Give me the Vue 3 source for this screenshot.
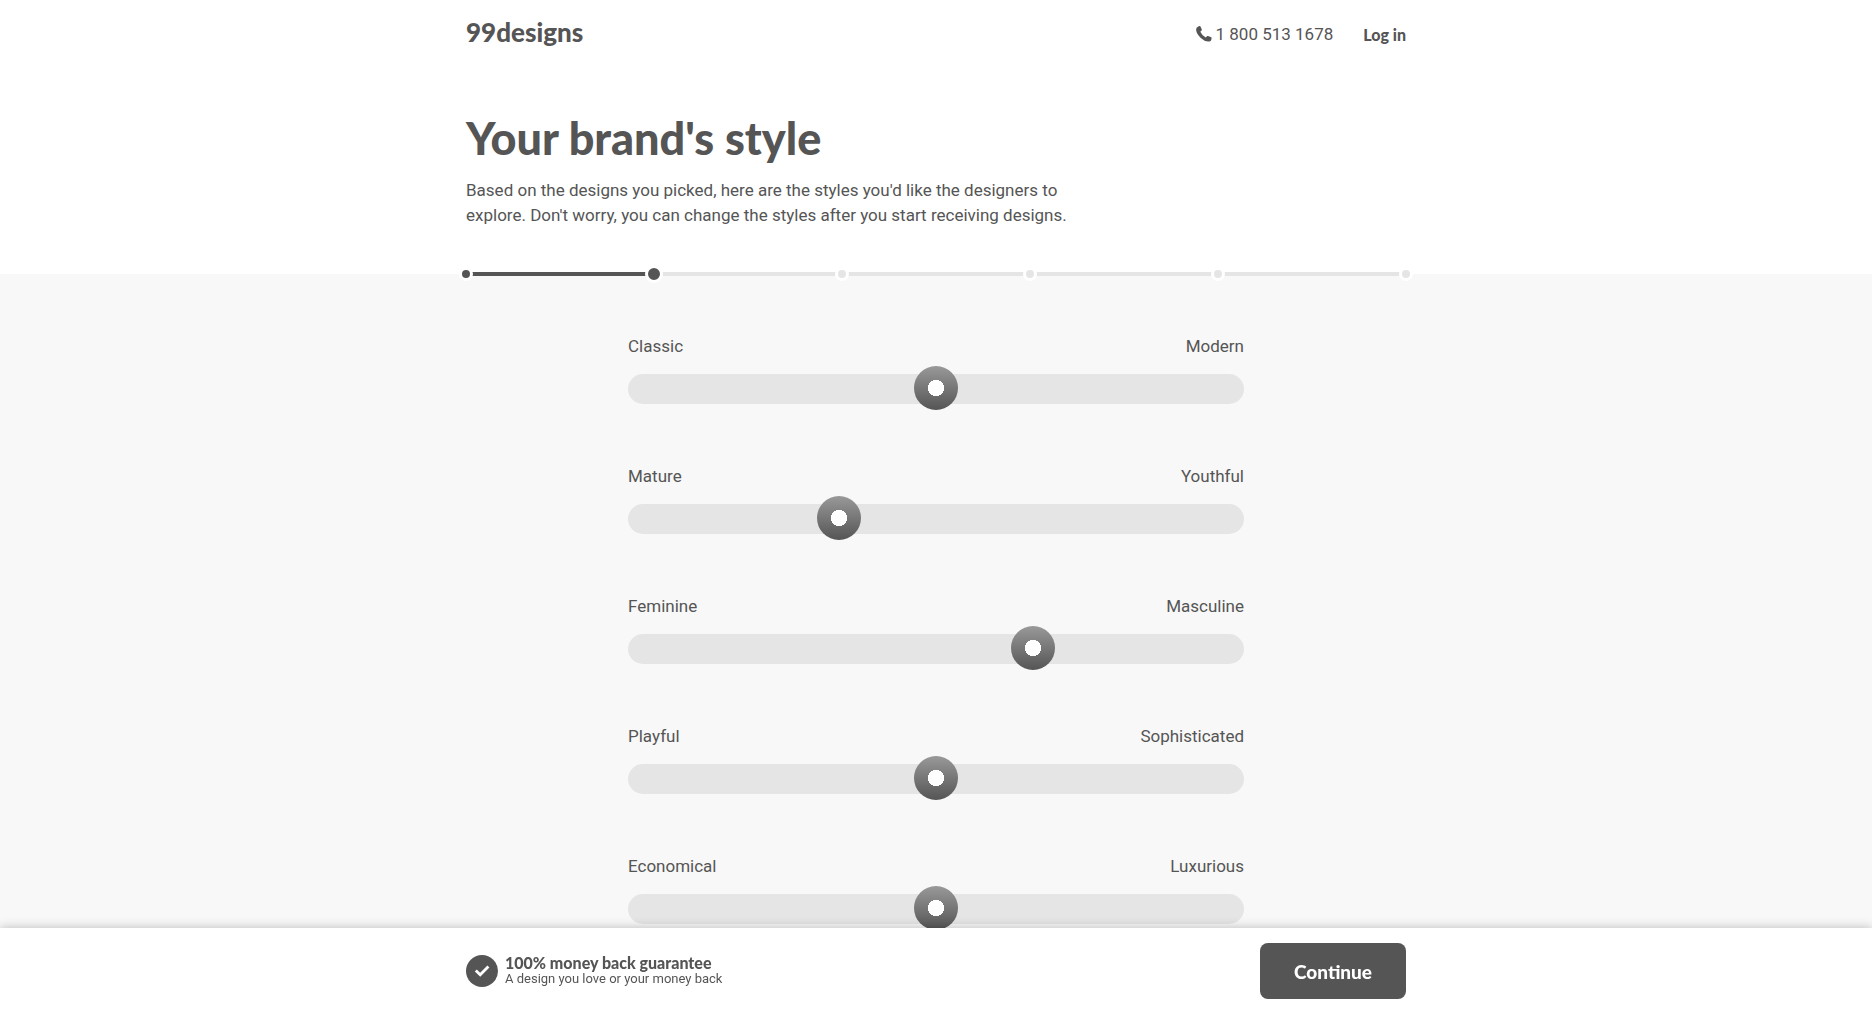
<template>
  <div class="page">
    <header class="top">
      <div class="container">
        <nav class="navbar">
          <a href="#" class="logo">99designs</a>
          <div class="nav-links">
            <a href="tel:18005131678" class="phone">
              <svg class="phone-icon" viewBox="0 0 16 16" aria-hidden="true">
                <path d="M2.2.5 3.600.1q.6-.1.9.5l1.300 2.900q.2.5-.2.9L4.300 5.700q1.800 3.900 5.500 5.700l1.400-1.300q.4-.3.900-.1l3.100 1.300q.6.3.4.9l-.4 1.900q-.2.900-1.100 1.200-4.700 1.100-9.300-3.300T.1 3.600Q.1 1.400 2.200.5z" />
              </svg>
              <span>1 800 513 1678</span>
            </a>
            <a href="#" class="login">Log in</a>
          </div>
        </nav>
        <h1 class="title">Your brand's style</h1>
        <p class="intro">
          Based on the designs you picked, here are the styles you'd like the designers to
          explore. Don't worry, you can change the styles after you start receiving designs.
        </p>
        <ol class="progress" aria-label="Progress">
          <li class="progress-fill" :style="{ width: progressWidth }" aria-hidden="true"></li>
          <li
            v-for="step in stepCount"
            :key="step"
            class="step"
            :class="{ done: step < currentStep, current: step === currentStep }"
          >
            <span class="dot"></span>
          </li>
        </ol>
      </div>
    </header>

    <main class="styles">
      <div v-for="item in sliders" :key="item.id" class="slider-row">
        <div class="slider-labels">
          <label :for="item.id">{{ item.left }}</label>
          <label :for="item.id">{{ item.right }}</label>
        </div>
        <input
          :id="item.id"
          v-model.number="item.value"
          class="slider"
          type="range"
          min="0"
          max="100"
        />
      </div>
    </main>

    <footer class="bottom-bar">
      <div class="container bottom-inner">
        <div class="guarantee">
          <svg class="guarantee-icon" viewBox="0 0 32 32" aria-hidden="true">
            <circle cx="16" cy="16" r="16" fill="#555" />
            <path d="M9.800 15.600l4.400 4.200 8.200-8.300" fill="none" stroke="#fff" stroke-width="2.800" />
          </svg>
          <div>
            <div class="guarantee-title">100% money back guarantee</div>
            <div class="guarantee-text">A design you love or your money back</div>
          </div>
        </div>
        <button type="button" class="continue-btn">Continue</button>
      </div>
    </footer>
  </div>
</template>

<script setup>
import { computed, ref } from 'vue'

const stepCount = 6
const currentStep = ref(2)

const progressWidth = computed(() => `${((currentStep.value - 1) / (stepCount - 1)) * 100}%`)

const sliders = ref([
  { id: 'classic-modern', left: 'Classic', right: 'Modern', value: 50 },
  { id: 'mature-youthful', left: 'Mature', right: 'Youthful', value: 33 },
  { id: 'feminine-masculine', left: 'Feminine', right: 'Masculine', value: 67 },
  { id: 'playful-sophisticated', left: 'Playful', right: 'Sophisticated', value: 50 },
  { id: 'economical-luxurious', left: 'Economical', right: 'Luxurious', value: 50 }
])
</script>

<style>
body {
  margin: 0;
  background: #f8f8f8;
}
</style>

<style scoped>
.page {
  font-family: Roboto, "Liberation Sans", sans-serif;
  font-size: 17px;
  line-height: 25px;
  color: #555;
}

.container {
  max-width: 940px;
  margin: 0 auto;
}

.top {
  display: flow-root;
  background: #fff;
}

.navbar {
  display: flex;
  align-items: center;
  justify-content: space-between;
  height: 68px;
}

.logo {
  padding-bottom: 4px;
  font-family: Lato, sans-serif;
  font-size: 26px;
  font-weight: 900;
  color: #555;
  text-decoration: none;
}

.nav-links {
  display: flex;
  align-items: center;
  gap: 30px;
}

.phone {
  display: flex;
  align-items: center;
  gap: 4px;
  color: #555;
  text-decoration: none;
}

.phone-icon {
  width: 16px;
  height: 16px;
  fill: #555;
}

.login {
  font-family: Lato, sans-serif;
  font-weight: 900;
  font-size: 16px;
  color: #555;
  text-decoration: none;
}

.title {
  margin: 0;
  padding-top: 40px;
  font-family: Lato, sans-serif;
  font-size: 45px;
  font-weight: 900;
  line-height: 60px;
}

.intro {
  max-width: 620px;
  margin: 0;
  padding: 10px 0 44px;
}

/* centred on the lower edge of the white header */
.progress {
  display: flex;
  align-items: center;
  justify-content: space-between;
  position: relative;
  height: 4px;
  margin: 0 0 -2px;
  padding: 0;
  list-style: none;
  background: #e5e5e5;
}

.progress-fill {
  position: absolute;
  left: 0;
  height: 4px;
  background: #555;
}

.step {
  position: relative;
  display: flex;
  justify-content: center;
  width: 0;
}

.dot {
  flex-shrink: 0;
  width: 8px;
  height: 8px;
  border: 3px solid #fff;
  border-radius: 50%;
  background: #e5e5e5;
}

.step.done .dot {
  background: #555;
}

.step.current .dot {
  width: 12px;
  height: 12px;
  background: #555;
}

.styles {
  display: flex;
  flex-direction: column;
  gap: 60px;
  max-width: 616px;
  margin: 0 auto;
  padding: 60px 0 86px;
}

.slider-row {
  display: flex;
  flex-direction: column;
  gap: 15px;
}

.slider-labels {
  display: flex;
  justify-content: space-between;
}

.slider {
  -webkit-appearance: none;
  appearance: none;
  display: block;
  width: 100%;
  height: 30px;
  margin: 0;
  border-radius: 15px;
  background: #e5e5e5;
  cursor: pointer;
}

.slider::-webkit-slider-runnable-track {
  height: 30px;
}

.slider::-webkit-slider-thumb {
  -webkit-appearance: none;
  appearance: none;
  width: 44px;
  height: 44px;
  margin-top: -8px;
  border-radius: 50%;
  background:
    radial-gradient(circle, #fff 8px, transparent 8px),
    linear-gradient(#999, #555);
}

.bottom-bar {
  position: fixed;
  right: 0;
  bottom: 0;
  left: 0;
  background: #fff;
  box-shadow: 0 0 10px rgba(0, 0, 0, 0.25);
}

.bottom-inner {
  display: flex;
  align-items: center;
  justify-content: space-between;
  height: 86px;
}

.guarantee {
  display: flex;
  align-items: center;
  gap: 7px;
}

.guarantee-icon {
  width: 32px;
  height: 32px;
}

.guarantee-title {
  font-family: Lato, sans-serif;
  font-size: 16px;
  font-weight: 900;
  line-height: 16px;
}

.guarantee-text {
  font-size: 13px;
  line-height: 16px;
}

.continue-btn {
  height: 56px;
  min-width: 146px;
  border: none;
  border-radius: 8px;
  font-family: Lato, sans-serif;
  font-size: 19px;
  font-weight: 900;
  color: #fff;
  background: #555;
  cursor: pointer;
}
</style>
